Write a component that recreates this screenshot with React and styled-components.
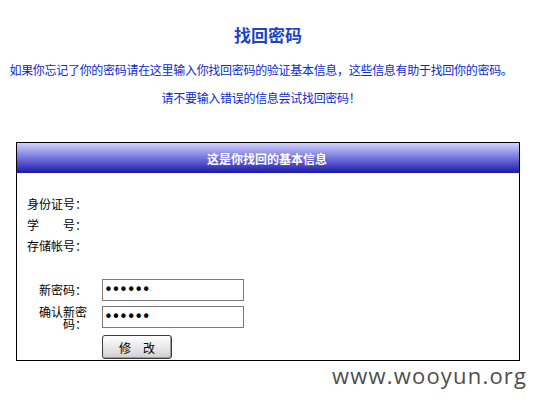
import styled, { createGlobalStyle } from "styled-components";

const GlobalStyle = createGlobalStyle`
    body {
        margin: 0;
        background: #fff;
        font-family: "Noto Sans CJK SC", "Liberation Sans", sans-serif;
        font-size: 12px;
        color: #000;
    }
`

// 전체 페이지
const Page = styled.div`
    position: relative;
    width: 538px;
    height: 405px;
    overflow: hidden;
`

const Title = styled.h1`
    margin: 0;
    padding: 26px 2px 0 0;
    text-align: center;
    font-size: 17px;
    line-height: 18px;
    font-weight: bold;
    color: #1d43c8;
`

// 안내 문구
const Intro = styled.div`
    padding-right: 16px;
    text-align: center;
    color: #0a2ad0;
    letter-spacing: -0.3px;
`

const IntroLine = styled.p`
    margin: ${(props) => props.$top}px 0 0;
    line-height: 16px;
`

// 정보 패널
const Panel = styled.div`
    box-sizing: border-box;
    width: 504px;
    margin: 36px 0 0 16px;
    border: 1px solid #000;
`

const PanelHeader = styled.div`
    height: 30px;
    display: flex;
    align-items: center;
    justify-content: center;
    padding-right: 2px;
    background: linear-gradient(#d2d2ff, #6a6ad8 55%, #1a18aa);
    color: #fff;
    font-weight: bold;
    font-size: 12px;
`

const InfoList = styled.div`
    display: flex;
    flex-direction: column;
    padding: 20px 0 0 10px;
`

const InfoRow = styled.div`
    height: 21px;
    line-height: 21px;
    white-space: pre;
`

// 비밀번호 변경 폼
const Form = styled.div`
    display: grid;
    grid-template-columns: 48px 142px;
    column-gap: 15px;
    row-gap: 5px;
    margin: 23px 0 0 22px;
    padding-bottom: 1px;
`

const Label = styled.div`
    align-self: center;
    text-align: right;
    line-height: 12px;
`

const Input = styled.input`
    box-sizing: border-box;
    width: 142px;
    height: 22px;
    margin: 0;
    padding: 0 0 0 1px;
    border: 1px solid #7a7a7a;
    background: #fff;
    font-family: "DejaVu Sans", sans-serif;
    font-size: 15px;
    letter-spacing: -1.3px;
    color: #000;
    outline: none;
`

const Button = styled.button`
    grid-column: 2;
    box-sizing: border-box;
    width: 70px;
    height: 24px;
    margin: 0;
    padding: 0;
    border: 1px solid #3c3c3c;
    border-radius: 3px;
    background: linear-gradient(#ffffff, #e4e4e4 60%, #cfcfcf);
    box-shadow: inset -1px -1px 0 #9a9a9a;
    font-family: "Noto Sans CJK SC", sans-serif;
    font-size: 12px;
    color: #000;
`

const Watermark = styled.div`
    position: absolute;
    left: 332px;
    top: 360px;
    font-family: "Open Sans", sans-serif;
    font-size: 22px;
    letter-spacing: 1.2px;
    line-height: 30px;
    color: #4e4e4e;
`

export default function App() {
    return (
        <Page>
            <GlobalStyle />
            <Title>找回密码</Title>
            <Intro>
                <IntroLine $top={18}>如果你忘记了你的密码请在这里输入你找回密码的验证基本信息，这些信息有助于找回你的密码。</IntroLine>
                <IntroLine $top={12}>请不要输入错误的信息尝试找回密码！</IntroLine>
            </Intro>
            <Panel>
                <PanelHeader>这是你找回的基本信息</PanelHeader>
                <InfoList>
                    <InfoRow>身份证号：</InfoRow>
                    <InfoRow>学　　号：</InfoRow>
                    <InfoRow>存储帐号：</InfoRow>
                </InfoList>
                <Form>
                    <Label>新密码：</Label>
                    <Input type="password" defaultValue="123456" readOnly />
                    <Label>确认新密码：</Label>
                    <Input type="password" defaultValue="123456" readOnly />
                    <Button type="button">修　改</Button>
                </Form>
            </Panel>
            <Watermark>www.wooyun.org</Watermark>
        </Page>
    )
}
